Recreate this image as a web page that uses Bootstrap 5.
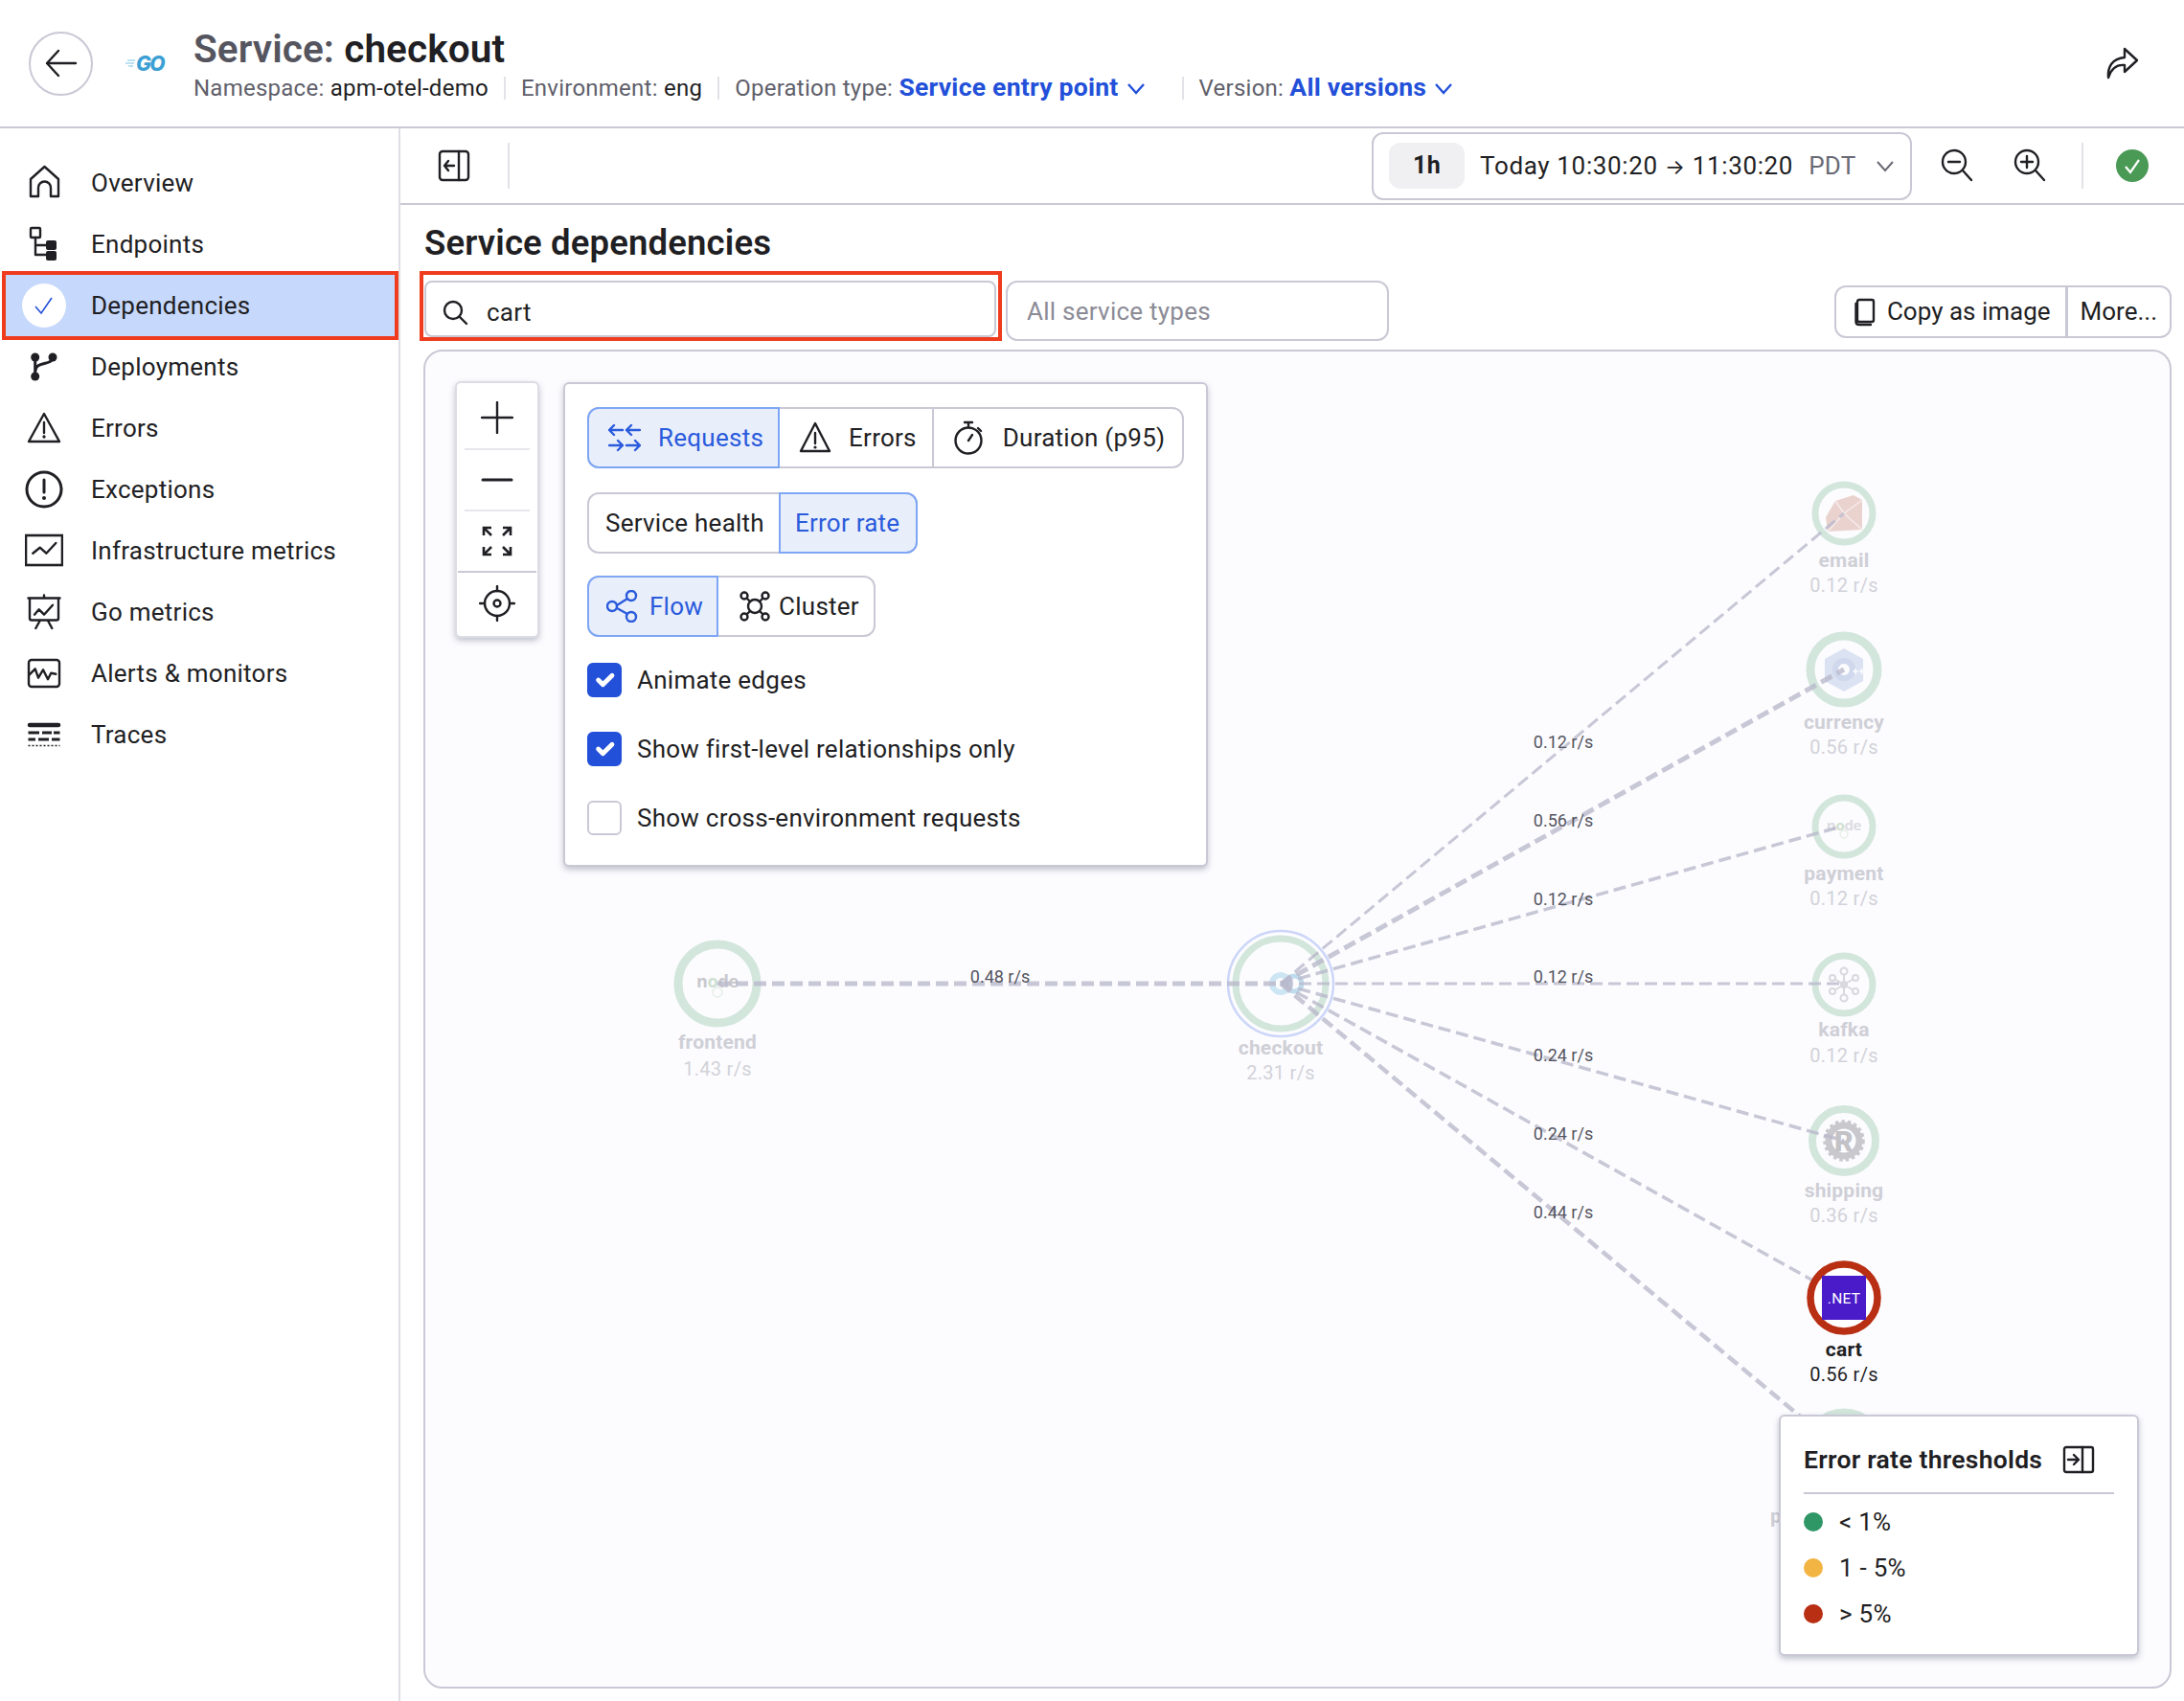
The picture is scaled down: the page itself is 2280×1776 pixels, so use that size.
<!DOCTYPE html>
<html lang="en">
<head>
<meta charset="UTF-8">
<title>Service dependencies</title>
<link href="https://cdn.jsdelivr.net/npm/bootstrap@5.3.0/dist/css/bootstrap.min.css" rel="stylesheet">
<style>
    body {
        width: 2280px;
        height: 1776px;
        overflow: hidden;
        font-family: Roboto, "Liberation Sans", sans-serif;
        font-size: 26px;
        letter-spacing: .25px;
        color: #1f1f24;
        background: #fff;
    }
    svg { display: block; flex: none; }
    .ico { fill: none; stroke: #1f1f24; stroke-width: 2.4; stroke-linecap: round; stroke-linejoin: round; }
    .ico.w3 { stroke-width: 3; }
    .ico.blue { stroke: #2a5bdc; }
    .ico.sharp { stroke-width: 2.600; stroke-linecap: butt; stroke-linejoin: miter; }
    .ico-fill { fill: #1f1f24; stroke: none; }

    .app-head { height: 134px; border-bottom: 2px solid #c9c9d6; padding: 0 30px; }
    .back-btn { width: 67px; height: 67px; border: 2px solid #c9c9d6; border-radius: 50%; background: #fff; padding: 0; }
    .go-logo { width: 41px; margin: 0 29px 0 34px; color: #3b9fd4; font: italic 800 21px/1 Inter, sans-serif; letter-spacing: -1.5px; white-space: nowrap; }
    .go-logo svg { display: inline-block; margin-right: 1px; }
    .head-text { margin-top: 4px; }
    .svc-title { font-size: 40.5px; font-weight: 600; line-height: 48px; letter-spacing: .1px; margin: 0 0 0 1px; color: #1f1f24; }
    .svc-title span { color: #55555f; }
    .svc-meta { font-size: 24px; line-height: 34px; color: #5f5f6b; margin: -1px 0 0 1px; }
    .svc-meta b { font-weight: 400; color: #1f1f24; }
    .svc-meta a { font-weight: 700; font-size: 26.500px; color: #2350d9; text-decoration: none; }
    .meta-sep { width: 2px; height: 24px; background: #e2e2e8; margin: 0 16px; }
    .meta-sep.far { margin-left: 38px; }
    .share-ico { margin-right: 17px; }

    .side { width: 418px; border-right: 2px solid #dfdfe6; padding-top: 25px; }
    .side-item { height: 64px; padding-left: 26px; gap: 29px; color: #1f1f24; text-decoration: none; }
    .side-item.is-active { background: #c6d8fb; margin: 0 4px 0 6px; padding-left: 20px; outline: 4px solid #f03c1e; outline-offset: 0; }
    .check-dot { width: 40px; height: 40px; display: flex; align-items: center; justify-content: center; }
    .check-dot span { width: 46px; height: 46px; flex: none; background: #fff; border-radius: 50%; display: flex; align-items: center; justify-content: center; }

    .tool-bar { height: 80px; border-bottom: 2px solid #c9c9d6; }
    .tool-left { width: 114px; padding-left: 38px; height: 48px; border-right: 2px solid #e2e2e8; }
    .time-box { width: 564px; height: 71px; border: 2px solid #c9c9d6; border-radius: 12px; padding: 0 16px; margin-right: 29px; }
    .time-1h { width: 79px; height: 48px; background: #f0f0f2; border-radius: 12px; font-weight: 700; font-size: 25px; margin-right: 16px; }
    .time-range { letter-spacing: .65px; }
    .time-arrow { font-family: Inter, sans-serif; font-size: 22px; }
    .time-tz { color: #6a6a75; margin-left: 16px; }
    .tool-sep { width: 2px; height: 48px; background: #e2e2e8; margin: 0 34px 0 36px; }
    .status-ico { margin-right: 37px; }
    .zoom-out-ico { margin-right: 40px; }

    .page-body { padding: 0 13px 13px 20px; min-height: 0; }
    .page-h { font-size: 36.500px; font-weight: 600; line-height: 44px; letter-spacing: .15px; margin: 18px 0 0 5px; }
    .search-wrap { width: 608px; height: 73px; border: 4px solid #f03c1e; padding: 6px 2px 0 1px; margin-top: 7px; }
    .search-box { height: 100%; border: 2px solid #c9c9d6; border-radius: 8px; padding: 7px 0 0 16px; gap: 19px; }
    .search-box input { border: 0; outline: 0; padding: 0; font: inherit; letter-spacing: inherit; width: 400px; color: #1f1f24; }
    .type-input.form-control { width: 400px; height: 63px; margin: 17px 0 0 4px; border: 2px solid #c9c9d6; border-radius: 12px; font-size: 26px; letter-spacing: .25px; padding: 0 20px; }
    .type-input::placeholder { color: #8b8b96; }
    .copy-grp { margin: 22px 0 0 auto; height: 55px; }
    .copy-grp .btn { font-size: 26px; letter-spacing: 0; border: 2px solid #c9c9d6; color: #1f1f24; padding: 0 13px; border-radius: 12px; background: #fff; display: flex; align-items: center; gap: 12px; }
    .copy-grp .btn:first-child { padding: 0 15px 0 19px; }

    .graph-area { position: relative; margin: 9px 0 0 4px; border: 2px solid #c9c9d6; border-radius: 20px; background: #fcfcff; overflow: hidden; }
    .graph-svg { position: absolute; left: 0; top: 0; }
    .n-name { font-size: 21px; font-weight: 700; fill: #cfcfd6; text-anchor: middle; letter-spacing: .2px; }
    .n-rate { font-size: 20px; fill: #d2d2d8; text-anchor: middle; letter-spacing: .3px; }
    .n-name.hot, .n-rate.hot { fill: #1f1f24; }
    .e-rate { font-size: 18px; fill: #55555f; text-anchor: middle; letter-spacing: 0; }
    .edge { fill: none; stroke: #b9b9cc; stroke-opacity: .8; stroke-dasharray: 13 6; }
    .node-txt { font: 700 18px "Open Sans", sans-serif; text-anchor: middle; fill: #c9c9cd; letter-spacing: -.3px; }
    .node-txt.sm { font-size: 15px; fill: #dcdce0; }
    .node-o { fill: #cfe0d0; }

    .zoom-ctl { position: absolute; left: 31px; top: 31px; width: 88px; height: 268px; background: #fff; border: 2px solid #dcdce4; border-radius: 6px; box-shadow: 0 3px 6px rgba(60,60,90,.3); }
    .zoom-cell { height: 64px; margin: 0 8px; border-bottom: 2px solid #e6e6ec; }
    .zoom-cell.first { height: 70px; padding-top: 4px; }
    .zoom-cell.wide { margin: 0 1px; border-bottom-color: #c9c9d6; }
    .zoom-cell.last { border: 0; height: 66px; padding-bottom: 3px; }

    .opts { position: absolute; left: 144px; top: 32px; width: 673px; height: 506px; background: #fff; border: 2px solid #c9c9d6; border-radius: 6px; box-shadow: 0 3px 6px rgba(60,60,90,.3); padding: 24px 22px 0 23px; }
    .seg { height: 64px; border: 2px solid #c9c9d6; border-radius: 12px; background: #fff; margin-bottom: 25px; width: max-content; }
    .seg-btn { height: 64px; margin: -2px 0; padding: 0 16px 0 18px; gap: 14px; border-right: 2px solid #c9c9d6; color: #1f1f24; }
    .seg-btn:last-child { border-right: 0; }
    .seg-btn.on { background: #e9eefb; color: #2a5bdc; border: 2px solid #7ea6f4; margin-left: -2px; }
    .seg-btn.on:first-child { border-radius: 12px 0 0 12px; }
    .seg-btn.on:last-child { border-radius: 0 12px 12px 0; margin-right: -2px; }
    .seg-req { gap: 18px; padding: 0 15px 0 20px; }
    .seg-err { padding-left: 20px; }
    .seg-dur { padding: 0 18px 0 19px; gap: 15px; }
    .seg-health { padding: 0 15px 0 17px; }
    .seg-rate { padding: 0 17px 0 15px; }
    .seg-flow { gap: 11px; padding-right: 14px; }
    .seg-cluster { gap: 9px; padding: 0 15px 0 22px; }
    .seg-last { margin-top: -2px; margin-bottom: 9px; }
    .opt-row { height: 72px; margin: 0; padding: 0; gap: 16px; }
    .opt-row .form-check-input { width: 36px; height: 36px; margin: 0; float: none; border: 2px solid #c9c9d6; border-radius: 6px; }
    .opt-row .form-check-input:checked { background-color: #2350d9; border-color: #2350d9; }

    .legend { position: absolute; right: 32px; bottom: 32px; width: 376px; height: 252px; background: #fff; border: 2px solid #c9c9d6; border-radius: 6px; box-shadow: 0 3px 6px rgba(60,60,90,.3); padding: 0 24px; }
    .legend-h { height: 81px; padding-top: 11px; border-bottom: 2px solid #c9c9d6; font-weight: 600; font-size: 26.500px; gap: 21px; }
    .legend-r { height: 48px; gap: 17px; font-size: 26px; }
    .legend-r i { width: 20px; height: 20px; border-radius: 50%; display: block; }
    .legend-rows { padding-top: 5px; }
</style>
</head>
<body>
<header class="app-head d-flex align-items-center">
    <button class="back-btn d-flex align-items-center justify-content-center" type="button">
        <svg width="36" height="36" viewBox="0 0 36 36"><path class="ico" d="M3 18H33M15 5 3 18l12 13"/></svg>
    </button>
    <div class="go-logo d-flex align-items-center">
        <svg width="10" height="10" viewBox="0 0 10 10"><path d="M2 2h8M0 5h9M3 8h5" stroke="#7cc4e4" stroke-width="1.2"/></svg>GO
    </div>
    <div class="head-text flex-grow-1">
        <h1 class="svc-title"><span>Service:</span> checkout</h1>
        <div class="svc-meta d-flex align-items-center">
            <span>Namespace: <b>apm-otel-demo</b></span><i class="meta-sep"></i>
            <span>Environment: <b>eng</b></span><i class="meta-sep"></i>
            <span>Operation type: <a href="#">Service entry point</a></span>
            <svg class="ms-2" width="20" height="20" viewBox="0 0 20 20"><path d="M2 6l8 9 8-9" fill="none" stroke="#2350d9" stroke-width="2.4"/></svg>
            <i class="meta-sep far"></i>
            <span>Version: <a href="#">All versions</a></span>
            <svg class="ms-2" width="20" height="20" viewBox="0 0 20 20"><path d="M2 6l8 9 8-9" fill="none" stroke="#2350d9" stroke-width="2.4"/></svg>
        </div>
    </div>
    <svg class="share-ico" width="36" height="36" viewBox="0 0 36 36"><path class="ico" d="M21 3 34 15 21 27v-7c-9-1-14 4-17 13-1-11 4-20 17-21z"/></svg>
</header>

<div class="d-flex" style="height:1642px">
    <nav class="side flex-shrink-0">
        <a class="side-item d-flex align-items-center" href="#">
            <svg width="40" height="40" viewBox="0 0 40 40"><path class="ico" d="M6 34V16L20.500 3 35 16V34H27V25a6 6 0 0 0-13 0V34Z"/></svg>Overview
        </a>
        <a class="side-item d-flex align-items-center" href="#">
            <svg width="40" height="40" viewBox="0 0 40 40"><rect class="ico" x="6" y="3" width="10" height="10" rx="1"/><path class="ico" d="M11 13V31H22M11 21H22"/><rect class="ico-fill" x="22" y="16" width="11" height="10" rx="2"/><rect class="ico-fill" x="22" y="27" width="11" height="10" rx="2"/></svg>Endpoints
        </a>
        <a class="side-item is-active d-flex align-items-center" href="#">
            <span class="check-dot"><span><svg width="22" height="22" viewBox="0 0 22 22"><path d="M2 12l6 7L19 3" fill="none" stroke="#2350d9" stroke-width="1.6"/></svg></span></span>Dependencies
        </a>
        <a class="side-item d-flex align-items-center" href="#">
            <svg width="40" height="40" viewBox="0 0 40 40"><path class="ico w3" d="M10.700 10V30M29 10c0 9-18 4-18 14"/><circle class="ico-fill" cx="10.700" cy="10" r="4.500"/><circle class="ico-fill" cx="29" cy="10" r="4.500"/><circle class="ico-fill" cx="10.700" cy="30" r="4.500"/></svg>Deployments
        </a>
        <a class="side-item d-flex align-items-center" href="#">
            <svg width="40" height="40" viewBox="0 0 40 40"><path class="ico" d="M20 5 4 34H36ZM20 14V25"/><circle class="ico-fill" cx="20" cy="29" r="1.700"/></svg>Errors
        </a>
        <a class="side-item d-flex align-items-center" href="#">
            <svg width="40" height="40" viewBox="0 0 40 40"><circle class="ico w3" cx="20" cy="20" r="18"/><path class="ico w3" d="M20 10V23"/><circle class="ico-fill" cx="20" cy="29" r="2"/></svg>Exceptions
        </a>
        <a class="side-item d-flex align-items-center" href="#">
            <svg width="40" height="40" viewBox="0 0 40 40"><rect class="ico sharp" x="1" y="4" width="38" height="31"/><path class="ico" d="M8.300 22.700 15.700 16.700 22.300 22.700 32.300 12"/></svg>Infrastructure metrics
        </a>
        <a class="side-item d-flex align-items-center" href="#">
            <svg width="40" height="40" viewBox="0 0 40 40"><path class="ico" d="M3.500 5.500H36.500M20 2.500V5.500M5 5.500V26.500Q5 28.500 7 28.500H33Q35 28.500 35 26.500V5.500M15.700 29 11.300 37M24 29 28.300 37M10 22.700 14.700 17.300 20 22.700 29 12.700"/></svg>Go metrics
        </a>
        <a class="side-item d-flex align-items-center" href="#">
            <svg width="40" height="40" viewBox="0 0 40 40"><rect class="ico" x="4" y="6" width="32" height="28" rx="3"/><path class="ico" d="M4.700 21.300 10.700 15.300 14 24.700 19 16.300 24 26.300 27.300 19.700 32.300 20.700"/></svg>Alerts &amp; monitors
        </a>
        <a class="side-item d-flex align-items-center" href="#">
            <svg width="40" height="40" viewBox="0 0 40 40"><path d="M5 10H35" stroke="#1f1f24" stroke-width="4.500" stroke-linecap="round"/><path d="M3.500 18H15M18 18H28M30 18H36.500M3.500 25H11M14 25H25M28 25H36.500" stroke="#1f1f24" stroke-width="3"/><path d="M3.500 31.500H36.500" stroke="#1f1f24" stroke-width="1.600" stroke-dasharray="2 2"/></svg>Traces
        </a>
    </nav>

    <main class="flex-grow-1 d-flex flex-column" style="min-width:0">
        <div class="tool-bar d-flex align-items-center">
            <div class="tool-left d-flex align-items-center">
                <svg width="36" height="36" viewBox="0 0 36 36"><rect class="ico" x="3" y="3" width="30" height="30" rx="3"/><path class="ico" d="M23 3V33M18 18H8M12 13 8 18l4 5"/></svg>
            </div>
            <div class="time-box d-flex align-items-center ms-auto">
                <span class="time-1h d-flex align-items-center justify-content-center">1h</span>
                <span class="time-range">Today 10:30:20 <span class="time-arrow">→</span> 11:30:20</span>
                <span class="time-tz">PDT</span>
                <svg class="ms-auto" width="20" height="20" viewBox="0 0 20 20"><path d="M2 6l8 9 8-9" fill="none" stroke="#6a6a75" stroke-width="2"/></svg>
            </div>
            <svg class="zoom-out-ico" width="36" height="36" viewBox="0 0 36 36"><circle class="ico" cx="15" cy="14" r="12"/><path class="ico" d="M24 23 33 33M9 14H21"/></svg>
            <svg width="36" height="36" viewBox="0 0 36 36"><circle class="ico" cx="15" cy="14" r="12"/><path class="ico" d="M24 23 33 33M9 14H21M15 8V20"/></svg>
            <i class="tool-sep"></i>
            <svg class="status-ico" width="34" height="34" viewBox="0 0 34 34"><circle cx="17" cy="17" r="17" fill="#4a9a55"/><path d="M10 18l5 6 9-13" fill="none" stroke="#fff" stroke-width="2.200"/></svg>
        </div>

        <div class="page-body flex-grow-1 d-flex flex-column">
            <h2 class="page-h">Service dependencies</h2>
            <div class="d-flex">
                <div class="search-wrap">
                    <div class="search-box d-flex align-items-center">
                        <svg width="28" height="28" viewBox="0 0 28 28"><circle class="ico" cx="12" cy="12" r="9"/><path class="ico" d="M18.500 18.500 26 26"/></svg>
                        <input type="text" value="cart">
                    </div>
                </div>
                <input class="form-control type-input" type="text" placeholder="All service types">
                <div class="btn-group copy-grp">
                    <button class="btn" type="button">
                        <svg width="22" height="30" viewBox="0 0 22 30"><path class="ico" d="M5 2H18Q20 2 20 4V23Q20 25 18 25H5Q3 25 3 23V4Q3 2 5 2ZM1.500 6V25Q1.500 28 5 28H17"/></svg>Copy as image
                    </button>
                    <button class="btn" type="button">More...</button>
                </div>
            </div>

            <div class="graph-area flex-grow-1">
                <svg class="graph-svg" width="1822" height="1394" viewBox="444 367 1822 1394">
                    <!-- nodes below the edges -->
                    <g fill="#fcfcff" stroke="#d3e6dc" stroke-width="9">
                        <circle cx="749" cy="1027" r="41"/>
                        <circle cx="1337" cy="1027" r="47" stroke-width="7"/>
                        <circle cx="1925" cy="536" r="30" stroke-width="7"/>
                        <circle cx="1925" cy="699" r="35"/>
                        <circle cx="1925" cy="863" r="30" stroke-width="7"/>
                        <circle cx="1925" cy="1028" r="30" stroke-width="7"/>
                        <circle cx="1925" cy="1191" r="33" stroke-width="8"/>
                        <circle cx="1925" cy="1513" r="38"/>
                    </g>
                    <circle cx="1337" cy="1027" r="55" fill="none" stroke="#ccd6f8" stroke-width="2.500"/>

                    <!-- faded service logos -->
                    <path d="M1906 540 1916 523 1935 517 1944 522 1944 553 1908 555Z" fill="#ead2cf"/>
                    <path d="M1916 523 1925 536 1944 522M1925 536 1908 555M1925 536 1944 553" fill="none" stroke="#f6ecea" stroke-width="1.500"/>
                    <path d="M1925 677l20 11v23l-20 11-20-11v-23z" fill="#dbe2f1"/>
                    <circle cx="1925" cy="699" r="9" fill="#fcfcff" stroke="#cfd8ec" stroke-width="6"/>
                    <path d="M1934 701h6M1937 698v6M1941 701h5M1943.500 698v6" stroke="#fcfcff" stroke-width="1.500"/>

                    <text class="node-txt" x="749" y="1031">n<tspan class="node-o">o</tspan>de</text>
                    <circle cx="749" cy="1036" r="5" fill="none" stroke="#e6eee6" stroke-width="1.500"/>
                    <text class="node-txt sm" x="1925" y="867">n<tspan class="node-o">o</tspan>de</text>
                    <circle cx="1925" cy="871" r="4" fill="none" stroke="#e6eee6" stroke-width="1.500"/>

                    <g fill="none" stroke="#d8d8de" stroke-width="2">
                        <circle cx="1925" cy="1028" r="3"/><circle cx="1925" cy="1014" r="3.500"/><circle cx="1925" cy="1042" r="3.500"/>
                        <circle cx="1937" cy="1021" r="3"/><circle cx="1937" cy="1035" r="3"/><circle cx="1913" cy="1021" r="3"/><circle cx="1913" cy="1035" r="3"/>
                        <path d="M1925 1017V1039M1915 1022l20 12M1935 1022l-20 12"/>
                    </g>

                    <circle cx="1925" cy="1191" r="16" fill="none" stroke="#c9c9cd" stroke-width="7"/>
                    <circle cx="1925" cy="1191" r="20" fill="none" stroke="#c9c9cd" stroke-width="3.500" stroke-dasharray="3.500 3"/>
                    <text x="1925" y="1202" fill="#c2c2c7" font-size="30" font-weight="900" text-anchor="middle">R</text>

                    <circle cx="1337" cy="1027" r="9" fill="none" stroke="#cde6f3" stroke-width="6"/>
                    <circle cx="1351" cy="1027" r="8" fill="none" stroke="#bfdcec" stroke-width="5"/>

                    <!-- edges -->
                    <path class="edge" stroke-width="5" d="M749 1027H1337"/>
                    <path class="edge" stroke-width="3" d="M1337 1027 1925 536"/>
                    <path class="edge" stroke-width="5" d="M1337 1027 1925 699"/>
                    <path class="edge" stroke-width="3.500" d="M1337 1027 1922 863"/>
                    <path class="edge" stroke-width="3" d="M1337 1027H1925"/>
                    <path class="edge" stroke-width="3.500" d="M1337 1027 1925 1191"/>
                    <path class="edge" stroke-width="3.500" d="M1337 1027 1925 1355"/>
                    <path class="edge" stroke-width="4.500" d="M1337 1027 1925 1517"/>

                    <!-- cart sits on top, it is the searched node -->
                    <circle cx="1925" cy="1355" r="35" fill="#fff" stroke="#b82f13" stroke-width="7.500"/>
                    <rect x="1902" y="1332" width="46" height="46" fill="#4a1bc9"/>
                    <text x="1925" y="1361" fill="#fff" font-size="15.500" text-anchor="middle">.NET</text>

                    <text class="e-rate" x="1044" y="1026">0.48 r/s</text>
                    <text class="e-rate" x="1632" y="781">0.12 r/s</text>
                    <text class="e-rate" x="1632" y="863">0.56 r/s</text>
                    <text class="e-rate" x="1632" y="945">0.12 r/s</text>
                    <text class="e-rate" x="1632" y="1026">0.12 r/s</text>
                    <text class="e-rate" x="1632" y="1108">0.24 r/s</text>
                    <text class="e-rate" x="1632" y="1190">0.24 r/s</text>
                    <text class="e-rate" x="1632" y="1272">0.44 r/s</text>

                    <text class="n-name" x="749" y="1095">frontend</text><text class="n-rate" x="749" y="1123">1.43 r/s</text>
                    <text class="n-name" x="1337" y="1101">checkout</text><text class="n-rate" x="1337" y="1127">2.31 r/s</text>
                    <text class="n-name" x="1925" y="592">email</text><text class="n-rate" x="1925" y="618">0.12 r/s</text>
                    <text class="n-name" x="1925" y="761">currency</text><text class="n-rate" x="1925" y="787">0.56 r/s</text>
                    <text class="n-name" x="1925" y="919">payment</text><text class="n-rate" x="1925" y="945">0.12 r/s</text>
                    <text class="n-name" x="1925" y="1082">kafka</text><text class="n-rate" x="1925" y="1109">0.12 r/s</text>
                    <text class="n-name" x="1925" y="1250">shipping</text><text class="n-rate" x="1925" y="1276">0.36 r/s</text>
                    <text class="n-name hot" x="1925" y="1416">cart</text><text class="n-rate hot" x="1925" y="1442">0.56 r/s</text>
                    <text class="n-name" x="1925" y="1590">product-catalog</text>
                </svg>

                <div class="zoom-ctl">
                    <div class="zoom-cell first d-flex align-items-center justify-content-center"><svg width="34" height="34" viewBox="0 0 34 34"><path class="ico" d="M1 17H33M17 1V33"/></svg></div>
                    <div class="zoom-cell d-flex align-items-center justify-content-center"><svg width="34" height="34" viewBox="0 0 34 34"><path class="ico w3" d="M2 17H32"/></svg></div>
                    <div class="zoom-cell wide d-flex align-items-center justify-content-center"><svg width="32" height="32" viewBox="0 0 32 32"><path class="ico sharp" d="M2 10V2H10M2 2 10 10M22 2H30V10M30 2 22 10M2 22V30H10M2 30 10 22M30 22V30H22M30 30 22 22"/></svg></div>
                    <div class="zoom-cell last d-flex align-items-center justify-content-center"><svg width="38" height="38" viewBox="0 0 38 38"><circle class="ico" cx="19" cy="19" r="13"/><circle class="ico" cx="19" cy="19" r="3.500"/><path class="ico" d="M19 1V6M19 32V37M1 19H6M32 19H37"/></svg></div>
                </div>

                <div class="opts">
                    <div class="seg d-flex">
                        <div class="seg-btn seg-req on d-flex align-items-center"><svg width="34" height="32" viewBox="0 0 34 32"><path class="ico blue" d="M15 8H1M6 3 1 8l5 5M33 8H19M24 3 19 8l5 5M1 24H15M10 19l5 5-5 5M19 24H33M28 19l5 5-5 5"/></svg>Requests</div>
                        <div class="seg-btn seg-err d-flex align-items-center"><svg width="34" height="34" viewBox="0 0 34 34"><path class="ico" d="M17 2 2 31H32ZM17 12V23"/><circle class="ico-fill" cx="17" cy="27" r="1.600"/></svg><span class="ms-1">Errors</span></div>
                        <div class="seg-btn seg-dur d-flex align-items-center"><svg width="34" height="36" viewBox="0 0 34 36"><circle class="ico" cx="17" cy="21" r="13.500"/><path class="ico" d="M13 2H21M17 2V7M27 8 30 11M17 21 21 15"/></svg><span class="ms-1">Duration (p95)</span></div>
                    </div>
                    <div class="seg d-flex">
                        <div class="seg-btn seg-health d-flex align-items-center">Service health</div>
                        <div class="seg-btn seg-rate on d-flex align-items-center">Error rate</div>
                    </div>
                    <div class="seg seg-last d-flex">
                        <div class="seg-btn seg-flow on d-flex align-items-center"><svg width="34" height="34" viewBox="0 0 34 34"><g class="ico blue"><circle cx="6" cy="17" r="5"/><circle cx="26" cy="6" r="5"/><circle cx="26" cy="28" r="5"/><path d="M11 16 22 9M11 19 22 25"/></g></svg>Flow</div>
                        <div class="seg-btn seg-cluster d-flex align-items-center"><svg width="32" height="32" viewBox="0 0 32 32"><g class="ico"><circle cx="16" cy="16" r="7"/><circle cx="5" cy="5" r="3.500"/><circle cx="27" cy="5" r="3.500"/><circle cx="5" cy="27" r="3.500"/><circle cx="27" cy="27" r="3.500"/><path d="M8 8 11 11M24 8 21 11M8 24 11 21M24 24 21 21"/></g></svg>Cluster</div>
                    </div>
                    <label class="form-check opt-row d-flex align-items-center"><input class="form-check-input" type="checkbox" checked>Animate edges</label>
                    <label class="form-check opt-row d-flex align-items-center"><input class="form-check-input" type="checkbox" checked>Show first-level relationships only</label>
                    <label class="form-check opt-row d-flex align-items-center"><input class="form-check-input" type="checkbox">Show cross-environment requests</label>
                </div>

                <div class="legend">
                    <div class="legend-h d-flex align-items-center">Error rate thresholds
                        <svg width="34" height="30" viewBox="0 0 34 30"><rect class="ico" x="2" y="2" width="30" height="26" rx="2"/><path class="ico" d="M21 2V28M6 15H16M12 10l5 5-5 5"/></svg>
                    </div>
                    <div class="legend-rows">
                        <div class="legend-r d-flex align-items-center"><i style="background:#2f9665"></i>&lt; 1%</div>
                        <div class="legend-r d-flex align-items-center"><i style="background:#f2b544"></i>1 - 5%</div>
                        <div class="legend-r d-flex align-items-center"><i style="background:#b82f13"></i>&gt; 5%</div>
                    </div>
                </div>
            </div>
        </div>
    </main>
</div>
<script src="https://cdn.jsdelivr.net/npm/bootstrap@5.3.0/dist/js/bootstrap.bundle.min.js"></script>
</body>
</html>
